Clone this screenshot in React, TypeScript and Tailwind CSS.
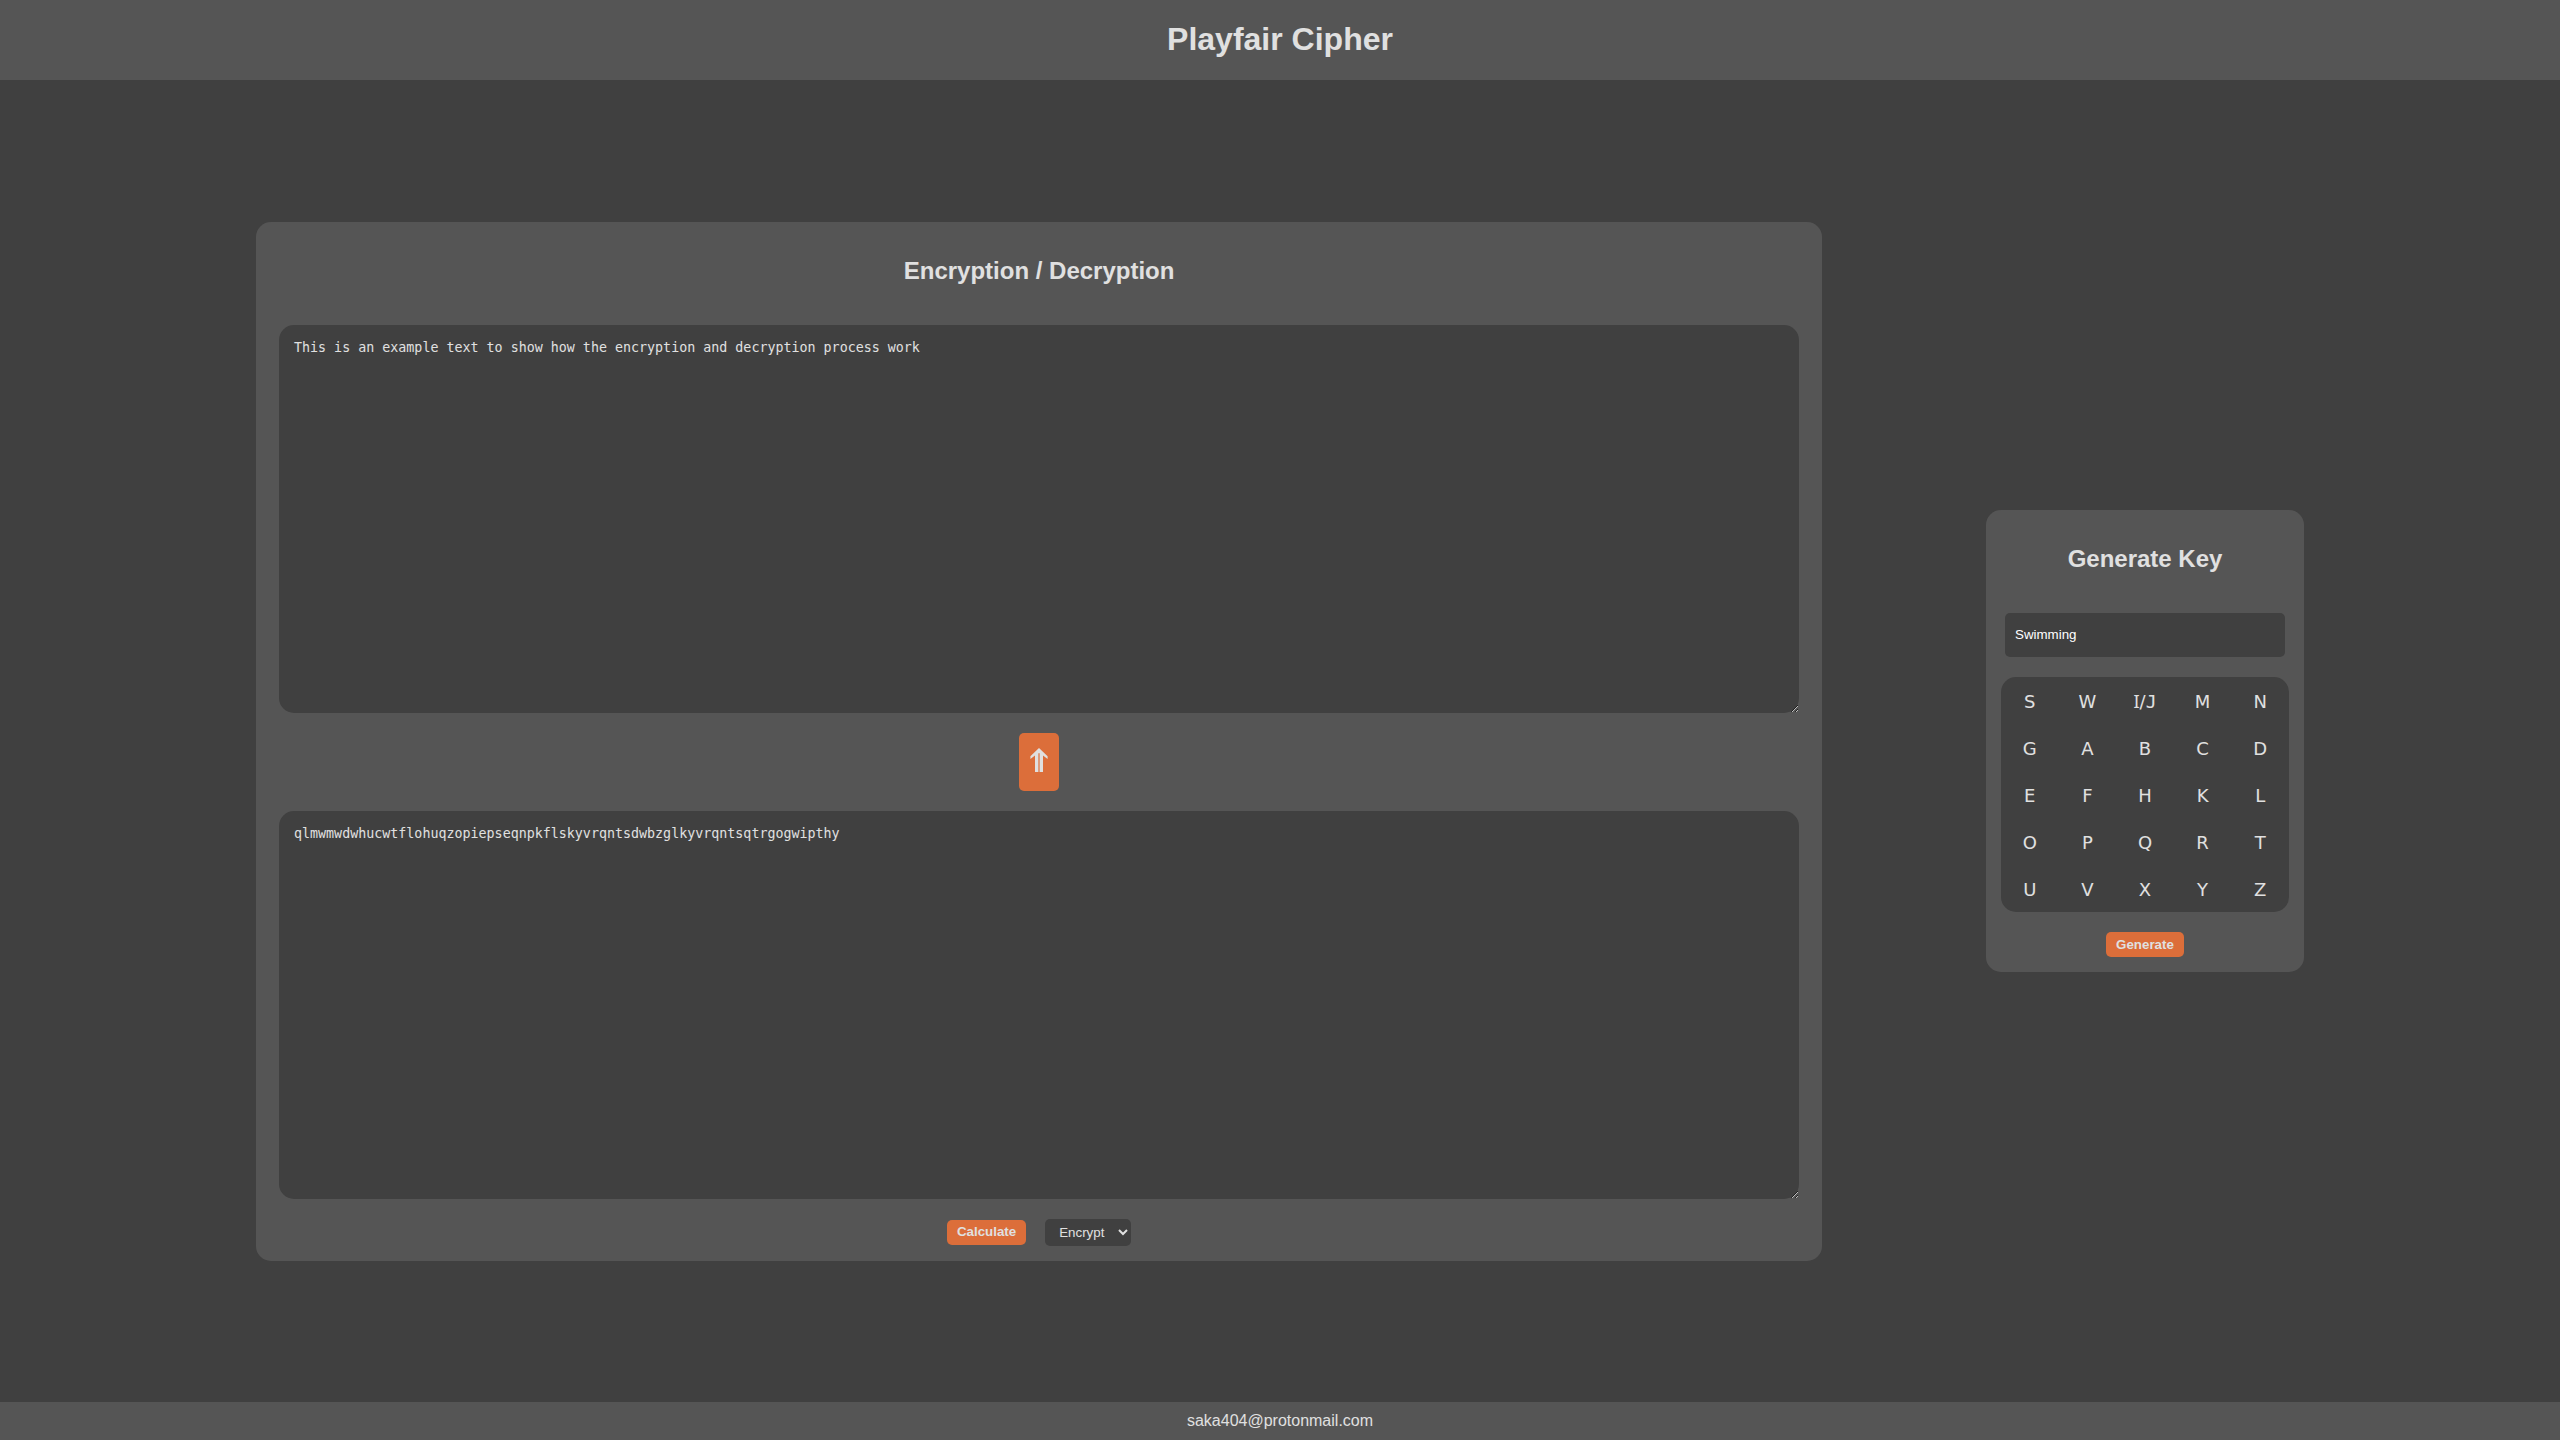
import { useState } from "react";

const KEY_ROWS = [
  ["S", "W", "I/J", "M", "N"],
  ["G", "A", "B", "C", "D"],
  ["E", "F", "H", "K", "L"],
  ["O", "P", "Q", "R", "T"],
  ["U", "V", "X", "Y", "Z"],
];

const AREA =
  "block h-[388px] w-full resize rounded-[15px] bg-[#404040] p-[15px] font-['DejaVu_Sans_Mono',monospace] [line-height:normal] [font-size:smaller] outline-none";

const BUTTON =
  "h-[25px] rounded-[5px] bg-[#dc6e3a] px-[10px] font-bold [font-size:smaller]";

function SharedCell() {
  return (
    <>
      <span className="font-['Noto_Sans',sans-serif] leading-none">I</span>/
      <span className="font-['DejaVu_Sans_Mono',monospace] leading-none">J</span>
    </>
  );
}

function UpArrow() {
  return (
    <svg width="18" height="24" viewBox="0 0 18 24" aria-hidden="true">
      <path
        d="M9 0 L17.6 8.2 V11 L13 7.6 V24 H9.6 V5.2 H8.4 V24 H5 V7.6 L0.4 11 V8.2 Z"
        fill="currentColor"
      />
    </svg>
  );
}

export default function App() {
  const [plain, setPlain] = useState(
    "This is an example text to show how the encryption and decryption process work",
  );
  const [cipher, setCipher] = useState(
    "qlmwmwdwhucwtflohuqzopiepseqnpkflskyvrqntsdwbzglkyvrqntsqtrgogwipthy",
  );
  const [word, setWord] = useState("Swimming");
  const [mode, setMode] = useState("Encrypt");

  return (
    <div className="flex min-h-screen flex-col bg-[#404040] font-['Liberation_Sans',Arial,sans-serif] text-base text-[#e0e0e0]">
      <header className="flex h-20 items-center justify-center bg-[#555555] pb-0.5">
        <h1 className="text-[32px] leading-9 font-bold">Playfair Cipher</h1>
      </header>

      <main className="flex flex-1 items-center gap-[8%] px-[10%]">
        <section className="flex flex-1 flex-col items-center rounded-[15px] bg-[#555555] px-[23px] py-[15px]">
          <h2 className="mt-5 mb-10 text-2xl leading-7 font-bold">Encryption / Decryption</h2>
          <textarea
            aria-label="Plain text"
            className={AREA}
            value={plain}
            onChange={(e) => setPlain(e.target.value)}
          />
          <button
            type="button"
            aria-label="Move result up"
            className="my-5 flex h-[58px] w-10 items-center justify-center rounded-[5px] bg-[#dc6e3a] pb-1"
          >
            <UpArrow />
          </button>
          <textarea
            aria-label="Cipher text"
            className={AREA}
            value={cipher}
            onChange={(e) => setCipher(e.target.value)}
          />
          <div className="mt-5 flex items-center gap-[19px]">
            <button type="button" className={BUTTON}>
              Calculate
            </button>
            <select
              aria-label="Mode"
              className="h-[27px] rounded-[5px] bg-[#404040] px-[10px] [font-size:smaller]"
              value={mode}
              onChange={(e) => setMode(e.target.value)}
            >
              <option>Encrypt</option>
              <option>Decrypt</option>
            </select>
          </div>
        </section>

        <section className="flex flex-col items-center rounded-[15px] bg-[#555555] p-[15px]">
          <h2 className="mt-5 mb-10 text-2xl leading-7 font-bold">Generate Key</h2>
          <input
            type="text"
            aria-label="Key word"
            className="h-11 w-[280px] rounded-[5px] bg-[#404040] px-[10px] pb-0.5 text-white [font-size:smaller] outline-none"
            value={word}
            onChange={(e) => setWord(e.target.value)}
          />
          <table
            aria-label="Key square"
            className="my-5 w-72 table-fixed rounded-[15px] bg-[#404040] text-center font-[Verdana,'DejaVu_Sans',sans-serif] text-lg"
          >
            <tbody>
              {KEY_ROWS.map((row) => (
                <tr key={row[0]}>
                  {row.map((cell) => (
                    <td key={cell} className="h-[47px] p-0 pt-0.5">
                      {cell === "I/J" ? <SharedCell /> : cell}
                    </td>
                  ))}
                </tr>
              ))}
            </tbody>
          </table>
          <button type="button" className={BUTTON}>
            Generate
          </button>
        </section>
      </main>

      <footer className="flex h-[38px] items-center justify-center bg-[#555555]">
        <address className="not-italic">saka404@protonmail.com</address>
      </footer>
    </div>
  );
}
